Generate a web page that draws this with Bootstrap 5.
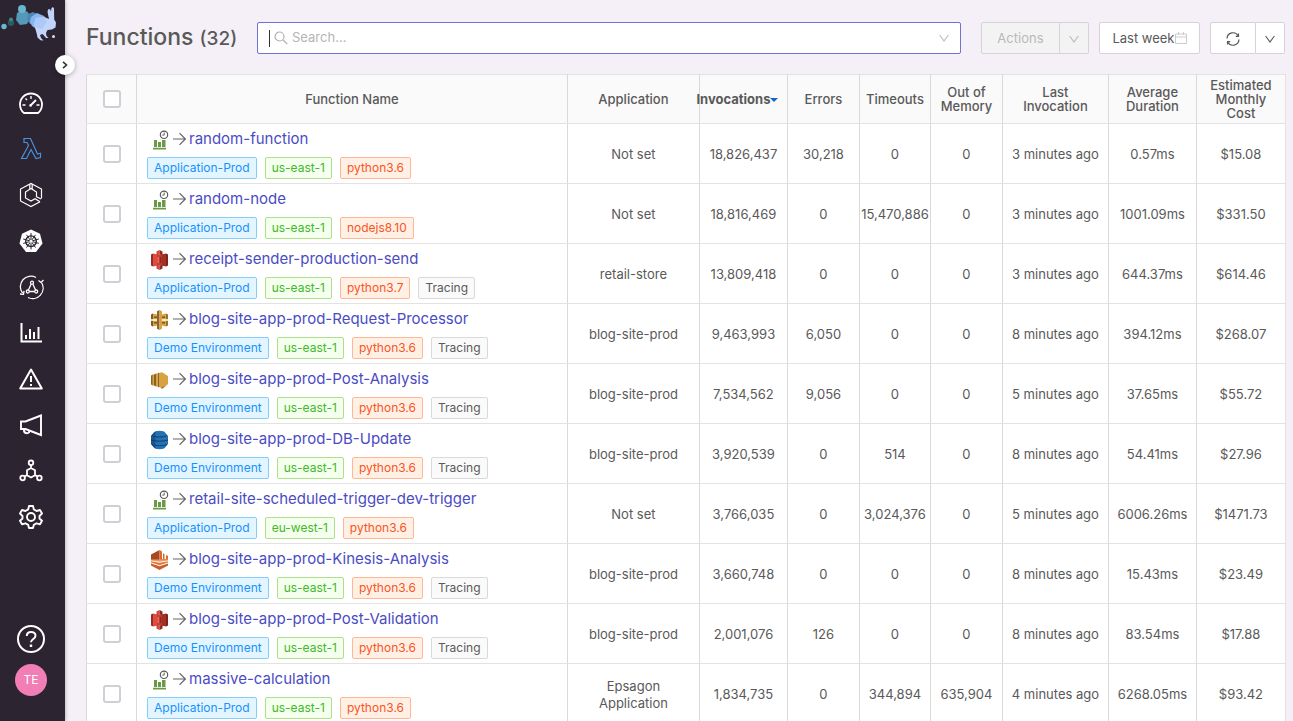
<!DOCTYPE html>
<html lang="en">
<head>
<meta charset="utf-8">
<meta name="viewport" content="width=device-width, initial-scale=1">
<title>Functions</title>
<link href="https://cdn.jsdelivr.net/npm/bootstrap@5.3.0/dist/css/bootstrap.min.css" rel="stylesheet">
<style>
  body { font-family: Inter, "Open Sans", sans-serif; font-size: 13px; color: #595959; background: #f5f0f7; }
  .side { width: 65px; background: #2c2430; color: #fff; box-shadow: 0 0 4px rgba(0,0,0,.35); }
  .side-brand { height: 80px; }
  .side-link { height: 46px; width: 62px; color: #fff; }
  .side-link.active { color: #4a90d9; }
  .side-foot { width: 62px; padding-bottom: 25px; gap: 11px; }
  .avatar { width: 32px; height: 32px; background: #f17eb5; color: #fff; font-size: 12px; }
  .side-toggle { top: 55px; right: -10px; width: 20px; height: 20px; background: #fff; color: #333; box-shadow: 0 1px 5px rgba(0,0,0,.3); z-index: 2; }
  .workspace { padding: 22px 7px 0 21px; }
  .toolbar { height: 32px; margin-bottom: 20px; padding-right: 1px; }
  .page-title { width: 151px; margin-right: 20px; font-size: 23px; font-weight: 500; line-height: 34px; color: #595959; }
  .page-title span { font-size: 19px; }
  .search { border: 1px solid #6f74d2; border-radius: 2px; padding: 0 10px 0 11px; margin-right: 20px; }
  .search-caret { width: 1px; height: 17px; background: #333; }
  .search input { font-size: 13px; color: #595959; outline: 0; }
  .search input::placeholder { color: #b5b5b5; }
  .tool-btn { height: 32px; border: 1px solid #d5d3d8; border-radius: 2px; background: #fff; color: #595959; font-size: 13px; line-height: 30px; padding: 0; }
  .tool-btn:disabled { background: #f4f3f4; color: #b9b9b9; border-color: #d5d3d8; opacity: 1; }
  .btn-actions { width: 79px; }
  .btn-caret { width: 29px; }
  .btn-week { width: 101px; margin: 0 10px; }
  .btn-refresh { width: 46px; }
  .fn-table { table-layout: fixed; border: 1px solid #e2e2e2; background: #fff; line-height: 17px; }
  .fn-table th, .fn-table td { padding: 0; border-left: 1px solid #d9d9d9; border-bottom: 1px solid #e2e2e2; text-align: center; vertical-align: middle; color: #595959; overflow: hidden; }
  .fn-table td { height: 60px; padding-top: 2px; }
  .fn-table th { height: 49px; background: #fafafa; font-weight: 500; line-height: 14px; }
  .fn-table .pick-cell { padding-top: 0; }
  .fn-table .sorted { overflow: visible; font-weight: 700; }
  .fn-table .sorted button { font: inherit; color: inherit; margin-left: -16px; margin-right: -4px; }
  .fn-table .fn-cell { text-align: left; padding: 0 10px 1px; }
  .fn-table .form-check-input { width: 18px; height: 18px; margin: 0; border: 2px solid #cdd0d7; border-radius: 3px; vertical-align: middle; }
  .fn-name { height: 24px; margin-bottom: 5px; padding-left: 4px; }
  .fn-name a { color: #4a4cc4; font-size: 15px; margin-left: 3px; line-height: 22px; padding-bottom: 2px; }
  .fn-name .arrow { margin: 0 0 2px 4px; color: #666; }
  .tag { height: 22px; line-height: 20px; padding: 0 6px; border: 1px solid; border-radius: 2px; font-size: 12px; }
  .tag-app { color: #1890ff; background: #e3f6ff; border-color: #85cdfb; }
  .tag-region { color: #41b92b; background: #f5ffed; border-color: #addf8d; }
  .tag-runtime { color: #fa541c; background: #fff0e6; border-color: #ffb795; }
  .tag-trace { color: #595959; background: #fafafa; border-color: #d9d9d9; }
</style>
</head>
<body>
<svg class="d-none" aria-hidden="true">
  <symbol id="i-arrow" viewBox="0 0 13 14"><path d="M0 7h12M6.500 1.200 12.300 7l-5.800 5.800" fill="none" stroke="currentColor" stroke-width="1.200"/></symbol>
  <symbol id="i-down" viewBox="0 0 10 8"><path d="M.6 1 5 7 9.400 1" fill="none" stroke="currentColor" stroke-width="1.100"/></symbol>
  <symbol id="i-timer" viewBox="0 0 18 20">
    <path d="M3 10h3v7H3zM7 12h3v5H7zM11 10h3.500v7H11zM2 17.700h13v1.800H2z" fill="#6a9a45"/>
    <circle cx="13" cy="4.800" r="3.700" fill="#fff" stroke="#555" stroke-width="1.100"/><path d="M13.200 2.500v2.600h-2" fill="none" stroke="#555" stroke-width=".9"/>
  </symbol>
  <symbol id="i-s3" viewBox="0 0 18 20">
    <path d="M0 4.500 2 3.500v13l-2-1z" fill="#8c3123"/><path d="m2 3.500 5 1v11l-5 1z" fill="#e04a40"/>
    <path d="m17 4.500-2-1v13l2-1z" fill="#7d231d"/><path d="m15 3.500-5 1v11l5 1z" fill="#a62e27"/>
    <path d="M6 4.500h5v11H6z" fill="#c73a33"/><path d="M5.500 1.500 8.500 0v4.500l-3 .8zM5.500 18.500l3 1.500v-4.500l-3-.8z" fill="#d8433a"/>
    <path d="m11.500 1.500-3-1.500v4.500l3 .8zM11.500 18.500l-3 1.500v-4.500l3-.8z" fill="#8c2a22"/>
    <path d="M6.500 7 8.500 6.700v6.600l-2-.3z" fill="#f06a5e"/><path d="m10.500 7-2-.3v6.600l2-.3z" fill="#8c2a22"/>
  </symbol>
  <symbol id="i-gateway" viewBox="0 0 18 20">
    <path d="m0 4.500 2-1v5.700H0zM0 10.800h2v5.700l-2-1z" fill="#7d5a20"/><path d="m2 3.500 4 1v4.700H2zM2 10.800h4v4.700l-4 1z" fill="#d9a241"/>
    <path d="m17 4.500-2-1v5.700h2zM17 10.800h-2v5.700l2-1z" fill="#9b722d"/><path d="m15 3.500-4 1v4.700h4zM15 10.800h-4v4.700l4 1z" fill="#d9a241"/>
    <path d="M6 1.200 8.500 0v20L6 18.800z" fill="#8c6526"/><path d="M11 1.200 8.500 0v20l2.500-1.200z" fill="#d9a241"/>
    <path d="M3 6.500h3V8H3zM3 12h3v1.500H3zM11 6.500h3V8h-3zM11 12h3v1.500h-3z" fill="#7d5a20"/>
  </symbol>
  <symbol id="i-ses" viewBox="0 0 18 20">
    <path d="m0 5.500 2-1v11l-2-1zM3 4.500l2-1v13l-2-1zM6.500 3.500l1.500-1v15l-1.500-1z" fill="#8a6425"/>
    <path d="M1.500 4.500H3v11H1.500zM5 3.500h1.500v13H5zM8 3l3-.8L17 6v8l-5 4.500L8 17z" fill="#d9a241"/><path d="M10.500 17.500V19l4-3z" fill="#8a6425"/>
  </symbol>
  <symbol id="i-dynamo" viewBox="0 0 18 20">
    <path d="M2.500 3c1-3 11-3 12 0l2.500 3v8l-2.500 3c-1 3-11 3-12 0L0 14V6z" fill="#2272b4"/><path d="M0 6l2.500-3 2-1.500v17L2.500 17 0 14z" fill="#1a568d"/>
    <path d="M1 5.500c3 2 12 2 15 0M0 10c4 1.500 13 1.500 17 0M1 14.500c3 1.500 12 1.500 15 0" fill="none" stroke="#123f6b"/>
  </symbol>
  <symbol id="i-kinesis" viewBox="0 0 18 20">
    <path d="m0 4.500 8.500-4.500v10H0z" fill="#a34a24"/><path d="M8.500 0v10H17V6l-2-1v4h-1.500V4l-1.500-.8V9h-1V1.500z" fill="#d8692f"/>
    <path d="m0 11.200 8.500 1.500 8.500-1.500v1.300l-8.500 2.700L0 12.500z" fill="#e2793c"/><path d="m0 13.600 8.500 2.700 8.500-2.700v2L8.500 20 0 15.600z" fill="#c95d2b"/><path d="M0 9.600h17v.8l-8.500 1.300L0 10.400z" fill="#f09a63"/>
  </symbol>
</svg>

<div class="d-flex vh-100 overflow-hidden">
  <aside class="side position-relative flex-shrink-0 d-flex flex-column">
    <div class="side-brand">
      <svg width="60" height="44" viewBox="0 0 60 44" role="img" aria-label="Home">
        <circle cx="4" cy="26.500" r="2.700" fill="#67b9d1"/><circle cx="11" cy="22.800" r="3.200" fill="#2c5a60"/><circle cx="11" cy="19.500" r="1.900" fill="#3c8992"/>
        <path d="m17 13 5-3 6 2 2 6-3 6-7 1-4-5z" fill="#5598b7"/>
        <circle cx="22" cy="9" r="4" fill="#68b5d0"/>
        <path d="m28 14 5-2 6 3 2 5-4 5-7-1-3-4z" fill="#4b87b8"/>
        <path d="m31 17 6-4 7 3 4 5-2 7-8 2-6-4-2-4z" fill="#85b6ee"/>
        <path d="m36 18 8-1 5 2-1.500-7 .5-2.500 2-.5 1 2.500.5-3.500 1.500-1 1 1.500.2 11 1.800 3-.5 5-3.500 2-4.500.5-1.500 3 .5 3 2 2h-2.500l-2.500-3-1-1-2.500 1 1 3 2.500 2.500-3-.3-3-2.700-.8-4L34 24z" fill="#c3d4fb"/>
        <path d="m36 18 8-1 3 5-5 7-5-1-3-4z" fill="#acc9fa"/>
        <circle cx="53.500" cy="36.500" r="1.500" fill="#d8dcff"/>
      </svg>
    </div>
    <nav class="d-flex flex-column" aria-label="Main">
      <a class="side-link d-flex align-items-center justify-content-center" href="#" aria-label="Dashboard"><svg width="26" height="26" viewBox="0 0 26 26" fill="none" stroke="currentColor" stroke-width="1.800"><path d="M6 23a11 11 0 1 1 14 0z"/><path d="m13 15 5-5" stroke-width="1.800"/><circle cx="12.600" cy="15.400" r="1.300" fill="currentColor" stroke="none"/><path d="M13 6v3M7.500 8.500 9 10M4.500 15h3M18.500 15h3" stroke-width="1.400"/></svg></a>
      <a class="side-link active d-flex align-items-center justify-content-center" href="#" aria-label="Functions" aria-current="page"><svg width="24" height="24" viewBox="0 0 24 24" fill="none" stroke="currentColor" stroke-width="1.200"><path d="M5 1.500h6.500L18.500 17l3-.8v4.300l-4.500 1L12 12.500 7.500 21.500H2.500l7-13-1.500-3H5z"/></svg></a>
      <a class="side-link d-flex align-items-center justify-content-center" href="#" aria-label="Containers"><svg width="24" height="26" viewBox="0 0 24 26" fill="none" stroke="currentColor" stroke-width="1.200"><path d="m22.500 16.500V7L12 1.500 1.500 7v12L12 24.500l9-4.800"/><path d="m17.500 15v-5L12 6.500 6.500 10v6l5.500 3 4-2.200 5 3M17 14.500l5 2.500M10.800 2v5M13.200 2v5"/></svg></a>
      <a class="side-link d-flex align-items-center justify-content-center" href="#" aria-label="Kubernetes"><svg width="24" height="24" viewBox="0 0 24 24"><path d="m12 .5 9 4.300 2.500 9.700-6.500 8.500H7L.5 14.500 3 4.800z" fill="currentColor"/><g fill="none" stroke="#2c2430" stroke-width="1.400"><circle cx="12" cy="12.200" r="5.300"/><path d="M12 4v16.400M4.200 10l15.600 4.400M4.200 14.400 19.800 10M7.500 5.800l9 12.800M16.500 5.800l-9 12.800" stroke-width="1"/></g><circle cx="12" cy="12.200" r="1.500" fill="currentColor"/></svg></a>
      <a class="side-link d-flex align-items-center justify-content-center" href="#" aria-label="Traces"><svg width="26" height="26" viewBox="0 0 26 26" fill="none" stroke="currentColor" stroke-width="1.300"><path d="M18 3.500A10.500 10.500 0 0 0 4.500 19M10 23.500a10.500 10.500 0 0 0 13.500-15"/><path d="m2 20 3.500.3.500-3.500M25.500 6l-2.500 2.500-2.500-2"/><path d="m13.200 10-2.800 6M14.800 10l2.800 6M11.500 17.500h5"/><circle cx="14" cy="8.700" r="1.500"/><circle cx="9.800" cy="17.500" r="1.500"/><circle cx="18.200" cy="17.500" r="1.500"/></svg></a>
      <a class="side-link d-flex align-items-center justify-content-center" href="#" aria-label="Metrics"><svg width="22" height="22" viewBox="0 0 22 22" fill="none" stroke="currentColor" stroke-width="2"><path d="M1.500 1v18.500H22M6 17v-4M10 17V7M14 17v-7M18.500 17V5"/></svg></a>
      <a class="side-link d-flex align-items-center justify-content-center" href="#" aria-label="Issues"><svg width="26" height="24" viewBox="0 0 26 24" fill="none" stroke="currentColor" stroke-width="2"><path d="M13 2.500 2.200 21.500h21.600z" stroke-linejoin="round"/><path d="M13 9v6M13 17v2"/></svg></a>
      <a class="side-link d-flex align-items-center justify-content-center" href="#" aria-label="Alerts"><svg width="24" height="24" viewBox="0 0 24 24" fill="none" stroke="currentColor" stroke-width="1.900"><path d="M2 8.500h4.500L22 2.500v19.500L6.500 16H2z"/><path d="M5 16.500c-.5 4.500 5 4.800 5.500 1.500"/></svg></a>
      <a class="side-link d-flex align-items-center justify-content-center" href="#" aria-label="Service map"><svg width="24" height="24" viewBox="0 0 24 24" fill="none" stroke="currentColor" stroke-width="1.800"><circle cx="12" cy="3.800" r="2.300"/><circle cx="3.600" cy="19" r="2.300"/><circle cx="20.400" cy="19" r="2.300"/><path d="M12 6v3l4 2.300v5L12 18.500l-4-2.200v-5L12 9M8 16l-2.300 1.500M16 16l2.300 1.500"/></svg></a>
      <a class="side-link d-flex align-items-center justify-content-center" href="#" aria-label="Settings"><svg width="26" height="26" viewBox="0 0 26 26" fill="none" stroke="currentColor" stroke-width="1.900" stroke-linejoin="round"><path d="M11 2h4l.8 3.400 2.800 1.600 3.400-1 2 3.500L21.500 12v2.500l2.500 2.300-2 3.500-3.400-1-2.800 1.600L15 24h-4l-.8-3.100-2.800-1.600-3.400 1-2-3.500L4.500 14.500V12L2 9.500 4 6l3.400 1 2.800-1.600z"/><circle cx="13" cy="13" r="4"/></svg></a>
    </nav>
    <div class="side-foot mt-auto d-flex flex-column align-items-center">
      <a href="#" class="text-white d-flex" aria-label="Help"><svg width="28" height="28" viewBox="0 0 28 28" fill="none" stroke="currentColor" stroke-width="2"><circle cx="14" cy="14" r="13"/><path d="M9.800 11c0-5.500 8.700-5.300 8.700-.2 0 3.200-4.500 3.200-4.500 6.500"/><path d="M14 19.500V22" stroke-width="2.400"/></svg></a>
      <button type="button" class="avatar border-0 rounded-circle p-0">TE</button>
    </div>
    <button type="button" class="side-toggle position-absolute border-0 rounded-circle p-0 d-flex align-items-center justify-content-center" aria-label="Expand menu"><svg width="6" height="8" viewBox="0 0 6 8"><path d="m1 .8 3.500 3.200L1 7.200" fill="none" stroke="currentColor" stroke-width="1.600"/></svg></button>
  </aside>

  <main class="workspace flex-grow-1 overflow-hidden">
    <header class="toolbar d-flex align-items-center">
      <h1 class="page-title mb-0 text-nowrap flex-shrink-0">Functions <span>(32)</span></h1>
      <div class="search d-flex align-items-center flex-grow-1 bg-white h-100">
        <span class="search-caret"></span>
        <svg class="ms-1 me-1" width="14" height="14" viewBox="0 0 14 14" fill="none" stroke="#b0b0b0" stroke-width="1.200"><circle cx="5.500" cy="5.500" r="4.500"/><path d="m9 9 4.300 4"/></svg>
        <input class="flex-grow-1 border-0 p-0 bg-transparent" type="text" placeholder="Search..." aria-label="Search functions">
        <svg width="12" height="8" style="color:#bbb"><use href="#i-down"/></svg>
      </div>
      <div class="d-flex flex-shrink-0">
        <button type="button" class="tool-btn btn-actions rounded-end-0" disabled>Actions</button>
        <button type="button" class="tool-btn btn-caret border-start-0 rounded-start-0" disabled aria-label="More actions"><svg width="10" height="8"><use href="#i-down"/></svg></button>
      </div>
      <button type="button" class="tool-btn btn-week flex-shrink-0 d-flex align-items-center justify-content-center">Last week<svg width="12" height="12" viewBox="0 0 12 12" fill="none" stroke="#ccc"><path d="M.5 2h11v9.500H.5zM.5 5h11M3.500 0v3M8.500 0v3"/></svg></button>
      <div class="d-flex flex-shrink-0">
        <button type="button" class="tool-btn btn-refresh rounded-end-0" aria-label="Refresh"><svg width="14" height="14" viewBox="0 0 14 14" fill="none" stroke="currentColor" stroke-width="1.200"><path d="M1 6.500A6 6 0 0 1 12.300 4M13 7.500A6 6 0 0 1 1.700 10"/><path d="M12.500 1.500V4.300H9.800M1.500 12.500V9.700h2.700"/></svg></button>
        <button type="button" class="tool-btn btn-caret border-start-0 rounded-start-0" aria-label="Refresh options"><svg width="10" height="8"><use href="#i-down"/></svg></button>
      </div>
    </header>

    <table class="fn-table w-100">
      <colgroup><col style="width:50px"><col><col style="width:132px"><col style="width:88px"><col style="width:72px"><col style="width:71px"><col style="width:72px"><col style="width:106px"><col style="width:88px"><col style="width:89px"></colgroup>
      <thead>
        <tr>
          <th scope="col"><input class="form-check-input" type="checkbox" aria-label="Select all"></th>
          <th scope="col">Function Name</th><th scope="col">Application</th>
          <th scope="col" class="sorted" aria-sort="descending"><button type="button" class="border-0 bg-transparent p-0 text-nowrap">Invocations<svg width="8" height="4" viewBox="0 0 8 4"><path d="M0 0h8L4 4z" fill="#1565c0"/></svg></button></th>
          <th scope="col">Errors</th><th scope="col">Timeouts</th><th scope="col">Out of<br>Memory</th><th scope="col">Last<br>Invocation</th><th scope="col">Average<br>Duration</th><th scope="col">Estimated<br>Monthly<br>Cost</th>
        </tr>
      </thead>
      <tbody>
        <tr>
          <td class="pick-cell"><input class="form-check-input" type="checkbox" aria-label="Select random-function"></td>
          <td class="fn-cell"><div class="fn-name d-flex align-items-center"><svg width="18" height="20"><use href="#i-timer"/></svg><svg class="arrow" width="13" height="14"><use href="#i-arrow"/></svg><a class="text-decoration-none" href="#">random-function</a></div>
            <div class="d-flex gap-2"><span class="tag tag-app">Application-Prod</span><span class="tag tag-region">us-east-1</span><span class="tag tag-runtime">python3.6</span></div></td>
          <td>Not set</td><td>18,826,437</td><td>30,218</td><td>0</td><td>0</td><td>3 minutes ago</td><td>0.57ms</td><td>$15.08</td>
        </tr>
        <tr>
          <td class="pick-cell"><input class="form-check-input" type="checkbox" aria-label="Select random-node"></td>
          <td class="fn-cell"><div class="fn-name d-flex align-items-center"><svg width="18" height="20"><use href="#i-timer"/></svg><svg class="arrow" width="13" height="14"><use href="#i-arrow"/></svg><a class="text-decoration-none" href="#">random-node</a></div>
            <div class="d-flex gap-2"><span class="tag tag-app">Application-Prod</span><span class="tag tag-region">us-east-1</span><span class="tag tag-runtime">nodejs8.10</span></div></td>
          <td>Not set</td><td>18,816,469</td><td>0</td><td>15,470,886</td><td>0</td><td>3 minutes ago</td><td>1001.09ms</td><td>$331.50</td>
        </tr>
        <tr>
          <td class="pick-cell"><input class="form-check-input" type="checkbox" aria-label="Select receipt-sender-production-send"></td>
          <td class="fn-cell"><div class="fn-name d-flex align-items-center"><svg width="18" height="20"><use href="#i-s3"/></svg><svg class="arrow" width="13" height="14"><use href="#i-arrow"/></svg><a class="text-decoration-none" href="#">receipt-sender-production-send</a></div>
            <div class="d-flex gap-2"><span class="tag tag-app">Application-Prod</span><span class="tag tag-region">us-east-1</span><span class="tag tag-runtime">python3.7</span><span class="tag tag-trace">Tracing</span></div></td>
          <td>retail-store</td><td>13,809,418</td><td>0</td><td>0</td><td>0</td><td>3 minutes ago</td><td>644.37ms</td><td>$614.46</td>
        </tr>
        <tr>
          <td class="pick-cell"><input class="form-check-input" type="checkbox" aria-label="Select blog-site-app-prod-Request-Processor"></td>
          <td class="fn-cell"><div class="fn-name d-flex align-items-center"><svg width="18" height="20"><use href="#i-gateway"/></svg><svg class="arrow" width="13" height="14"><use href="#i-arrow"/></svg><a class="text-decoration-none" href="#">blog-site-app-prod-Request-Processor</a></div>
            <div class="d-flex gap-2"><span class="tag tag-app">Demo Environment</span><span class="tag tag-region">us-east-1</span><span class="tag tag-runtime">python3.6</span><span class="tag tag-trace">Tracing</span></div></td>
          <td>blog-site-prod</td><td>9,463,993</td><td>6,050</td><td>0</td><td>0</td><td>8 minutes ago</td><td>394.12ms</td><td>$268.07</td>
        </tr>
        <tr>
          <td class="pick-cell"><input class="form-check-input" type="checkbox" aria-label="Select blog-site-app-prod-Post-Analysis"></td>
          <td class="fn-cell"><div class="fn-name d-flex align-items-center"><svg width="18" height="20"><use href="#i-ses"/></svg><svg class="arrow" width="13" height="14"><use href="#i-arrow"/></svg><a class="text-decoration-none" href="#">blog-site-app-prod-Post-Analysis</a></div>
            <div class="d-flex gap-2"><span class="tag tag-app">Demo Environment</span><span class="tag tag-region">us-east-1</span><span class="tag tag-runtime">python3.6</span><span class="tag tag-trace">Tracing</span></div></td>
          <td>blog-site-prod</td><td>7,534,562</td><td>9,056</td><td>0</td><td>0</td><td>5 minutes ago</td><td>37.65ms</td><td>$55.72</td>
        </tr>
        <tr>
          <td class="pick-cell"><input class="form-check-input" type="checkbox" aria-label="Select blog-site-app-prod-DB-Update"></td>
          <td class="fn-cell"><div class="fn-name d-flex align-items-center"><svg width="18" height="20"><use href="#i-dynamo"/></svg><svg class="arrow" width="13" height="14"><use href="#i-arrow"/></svg><a class="text-decoration-none" href="#">blog-site-app-prod-DB-Update</a></div>
            <div class="d-flex gap-2"><span class="tag tag-app">Demo Environment</span><span class="tag tag-region">us-east-1</span><span class="tag tag-runtime">python3.6</span><span class="tag tag-trace">Tracing</span></div></td>
          <td>blog-site-prod</td><td>3,920,539</td><td>0</td><td>514</td><td>0</td><td>8 minutes ago</td><td>54.41ms</td><td>$27.96</td>
        </tr>
        <tr>
          <td class="pick-cell"><input class="form-check-input" type="checkbox" aria-label="Select retail-site-scheduled-trigger-dev-trigger"></td>
          <td class="fn-cell"><div class="fn-name d-flex align-items-center"><svg width="18" height="20"><use href="#i-timer"/></svg><svg class="arrow" width="13" height="14"><use href="#i-arrow"/></svg><a class="text-decoration-none" href="#">retail-site-scheduled-trigger-dev-trigger</a></div>
            <div class="d-flex gap-2"><span class="tag tag-app">Application-Prod</span><span class="tag tag-region">eu-west-1</span><span class="tag tag-runtime">python3.6</span></div></td>
          <td>Not set</td><td>3,766,035</td><td>0</td><td>3,024,376</td><td>0</td><td>5 minutes ago</td><td>6006.26ms</td><td>$1471.73</td>
        </tr>
        <tr>
          <td class="pick-cell"><input class="form-check-input" type="checkbox" aria-label="Select blog-site-app-prod-Kinesis-Analysis"></td>
          <td class="fn-cell"><div class="fn-name d-flex align-items-center"><svg width="18" height="20"><use href="#i-kinesis"/></svg><svg class="arrow" width="13" height="14"><use href="#i-arrow"/></svg><a class="text-decoration-none" href="#">blog-site-app-prod-Kinesis-Analysis</a></div>
            <div class="d-flex gap-2"><span class="tag tag-app">Demo Environment</span><span class="tag tag-region">us-east-1</span><span class="tag tag-runtime">python3.6</span><span class="tag tag-trace">Tracing</span></div></td>
          <td>blog-site-prod</td><td>3,660,748</td><td>0</td><td>0</td><td>0</td><td>8 minutes ago</td><td>15.43ms</td><td>$23.49</td>
        </tr>
        <tr>
          <td class="pick-cell"><input class="form-check-input" type="checkbox" aria-label="Select blog-site-app-prod-Post-Validation"></td>
          <td class="fn-cell"><div class="fn-name d-flex align-items-center"><svg width="18" height="20"><use href="#i-s3"/></svg><svg class="arrow" width="13" height="14"><use href="#i-arrow"/></svg><a class="text-decoration-none" href="#">blog-site-app-prod-Post-Validation</a></div>
            <div class="d-flex gap-2"><span class="tag tag-app">Demo Environment</span><span class="tag tag-region">us-east-1</span><span class="tag tag-runtime">python3.6</span><span class="tag tag-trace">Tracing</span></div></td>
          <td>blog-site-prod</td><td>2,001,076</td><td>126</td><td>0</td><td>0</td><td>8 minutes ago</td><td>83.54ms</td><td>$17.88</td>
        </tr>
        <tr>
          <td class="pick-cell"><input class="form-check-input" type="checkbox" aria-label="Select massive-calculation"></td>
          <td class="fn-cell"><div class="fn-name d-flex align-items-center"><svg width="18" height="20"><use href="#i-timer"/></svg><svg class="arrow" width="13" height="14"><use href="#i-arrow"/></svg><a class="text-decoration-none" href="#">massive-calculation</a></div>
            <div class="d-flex gap-2"><span class="tag tag-app">Application-Prod</span><span class="tag tag-region">us-east-1</span><span class="tag tag-runtime">python3.6</span></div></td>
          <td>Epsagon<br>Application</td><td>1,834,735</td><td>0</td><td>344,894</td><td>635,904</td><td>4 minutes ago</td><td>6268.05ms</td><td>$93.42</td>
        </tr>
      </tbody>
    </table>
  </main>
</div>
<script src="https://cdn.jsdelivr.net/npm/bootstrap@5.3.0/dist/js/bootstrap.bundle.min.js"></script>
</body>
</html>
